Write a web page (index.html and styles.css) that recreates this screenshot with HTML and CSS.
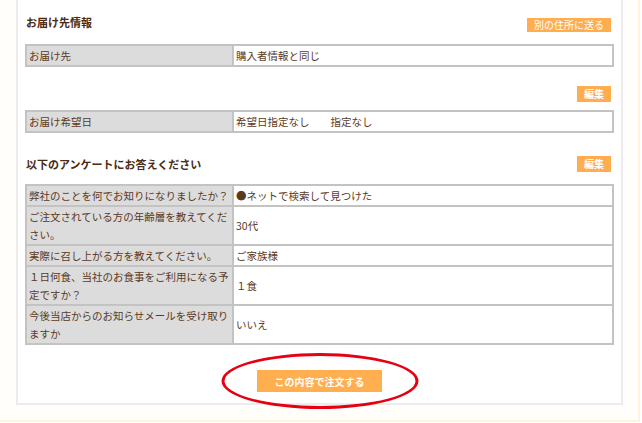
FILE: index.html
```html
<!DOCTYPE html>
<html lang="ja">
<head>
<meta charset="utf-8">
<title>ご注文内容の確認</title>
<link rel="stylesheet" href="styles.css">
</head>
<body>
<div class="page">
  <div class="card">
    <div class="sec-head first">
      <h2>お届け先情報</h2>
      <span class="btn btn-wide">別の住所に送る</span>
    </div>
    <table class="info t1">
      <tr><th>お届け先</th><td>購入者情報と同じ</td></tr>
    </table>
    <div class="edit-row"><span class="btn btn-edit">編集</span></div>
    <table class="info t2">
      <tr><th>お届け希望日</th><td>希望日指定なし　　指定なし</td></tr>
    </table>
    <div class="sec-head second">
      <h2>以下のアンケートにお答えください</h2>
      <span class="btn btn-edit">編集</span>
    </div>
    <table class="info t3">
      <tr><th>弊社のことを何でお知りになりましたか？</th><td>●ネットで検索して見つけた</td></tr>
      <tr><th>ご注文されている方の年齢層を教えてください。</th><td>30代</td></tr>
      <tr><th>実際に召し上がる方を教えてください。</th><td>ご家族様</td></tr>
      <tr><th>１日何食、当社のお食事をご利用になる予定ですか？</th><td>１食</td></tr>
      <tr><th>今後当店からのお知らせメールを受け取りますか</th><td>いいえ</td></tr>
    </table>
    <div class="submit-row">
      <span class="submit-wrap">
        <button class="submit" type="button">この内容で注文する</button>
        <span class="ellipse"></span>
      </span>
    </div>
  </div>
</div>
</body>
</html>
```

FILE: styles.css
```css
html, body {
  margin: 0;
  padding: 0;
  background: #ffffff;
}

body {
  font-family: "Noto Sans CJK JP", "Noto Sans", sans-serif;
  color: #5b3a1e;
}

.page {
  width: 622px;
  height: 420px;
  padding-left: 16px;
  background: #fffefa;
  border-right: 2px solid #fcf4df;
  border-bottom: 2px solid #fcf4df;
  overflow: hidden;
}

.card {
  box-sizing: border-box;
  width: 607px;
  background: #ffffff;
  border: 2px solid #ececec;
  border-top: 0;
  padding: 18px 7px 11px 7px;
}

.sec-head {
  display: flex;
  justify-content: space-between;
}

.sec-head h2 {
  margin: 0 0 0 1px;
  font-size: 11px;
  line-height: 14px;
  font-weight: bold;
  color: #4a2b14;
}

.sec-head.first {
  align-items: flex-start;
  height: 14px;
}

.sec-head.first h2 {
  margin-top: -3px;
}

.sec-head.second {
  align-items: center;
  height: 16px;
  margin-top: 23px;
}

.btn {
  display: inline-block;
  background: #ffad4f;
  color: #ffffff;
  font-size: 10px;
  margin-right: 3px;
  white-space: nowrap;
}

.btn-wide {
  line-height: 14px;
  padding: 0 7px;
}

.btn-edit {
  line-height: 16px;
  padding: 0 7px;
  font-weight: bold;
}

.edit-row {
  display: flex;
  justify-content: flex-end;
  margin-top: 19px;
}

.info {
  width: 100%;
  border-collapse: collapse;
  font-size: 10.5px;
  line-height: 18px;
}

.info th,
.info td {
  border: 2px solid #c3c3c3;
  padding: 1px 2px 0;
  text-align: left;
  font-weight: normal;
  vertical-align: middle;
}

.info th {
  width: 201px;
  background: #dcdcdc;
}

.info td {
  background: #ffffff;
}

.t1 {
  margin-top: 12px;
}

.t2 {
  margin-top: 8px;
}

.t3 {
  margin-top: 12px;
}

.submit-row {
  margin-top: 25px;
  text-align: center;
  height: 22px;
}

.submit-wrap {
  display: inline-block;
  position: relative;
  vertical-align: top;
}

.submit {
  display: block;
  width: 125px;
  height: 22px;
  padding: 0;
  border: 0;
  background: #ffae50;
  color: #ffffff;
  font-family: inherit;
  font-size: 10px;
  font-weight: bold;
}

.ellipse {
  position: absolute;
  left: 50%;
  top: 50%;
  width: 197px;
  height: 56px;
  box-sizing: border-box;
  border: 3px solid #e60012;
  border-radius: 50%;
  transform: translate(-50%, -50%);
  pointer-events: none;
}
```
